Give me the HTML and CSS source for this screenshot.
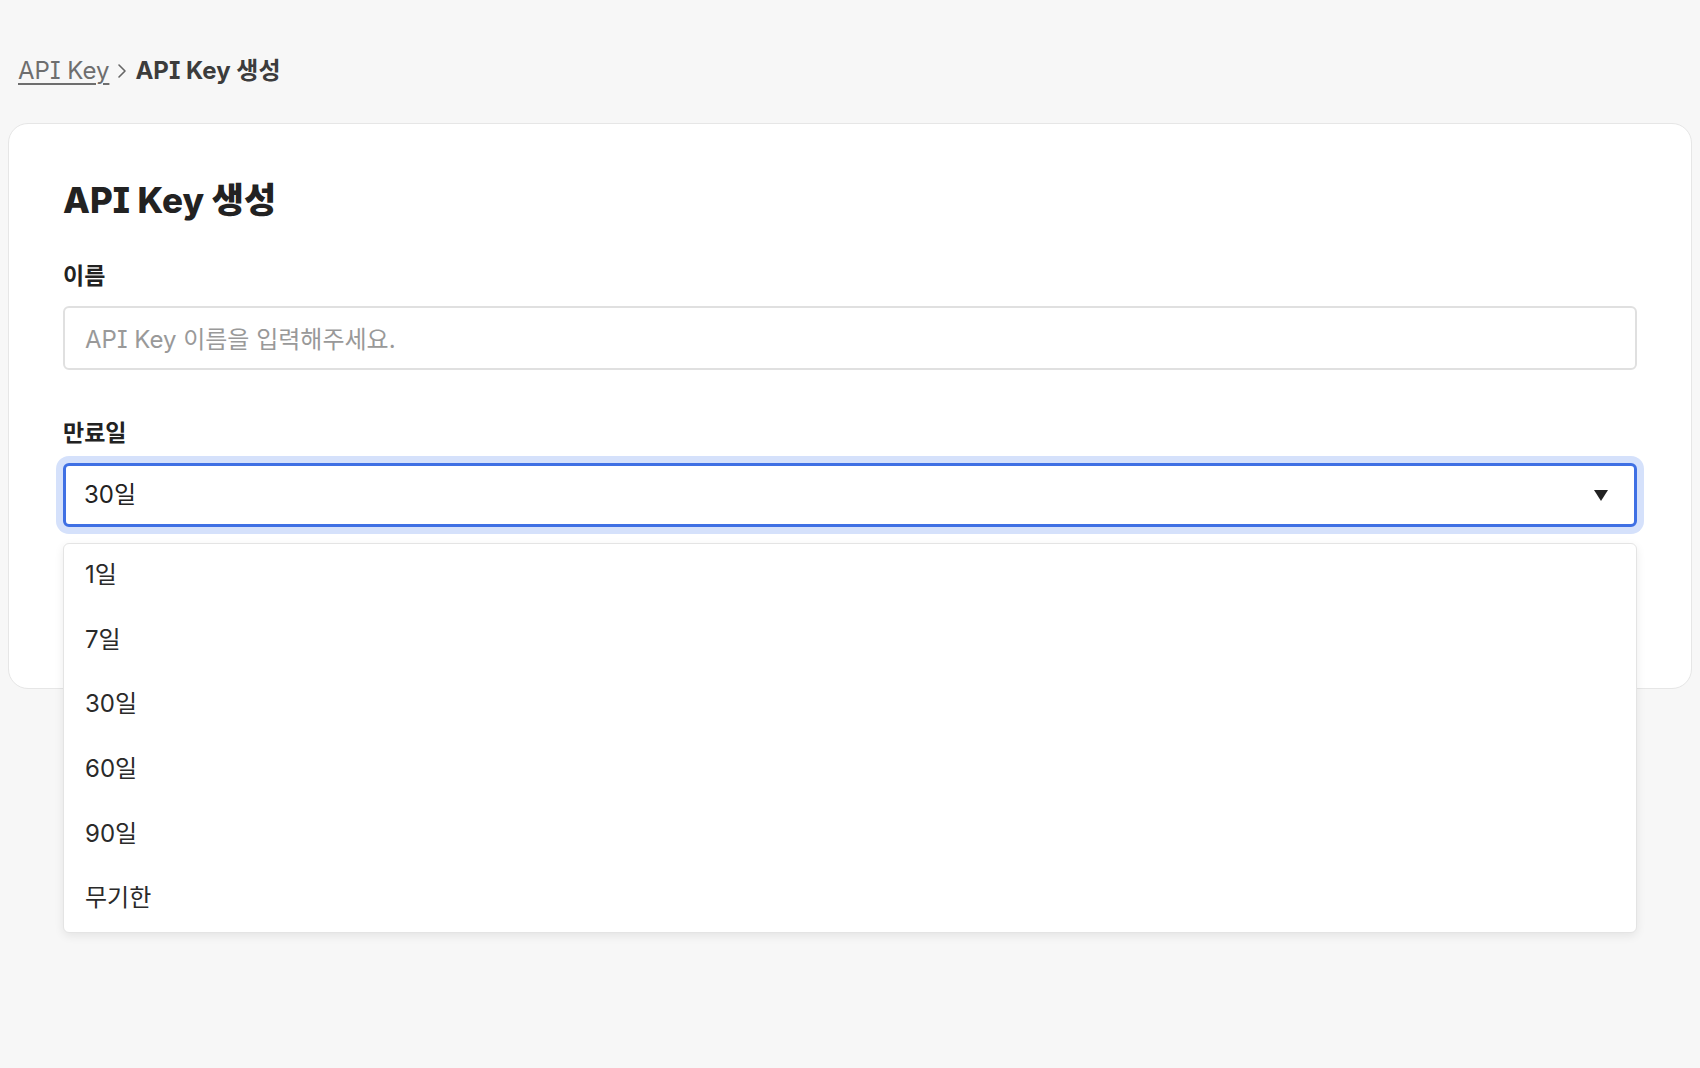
FILE: index.html
```html
<!DOCTYPE html>
<html lang="ko">
<head>
<meta charset="utf-8">
<title>API Key 생성</title>
<link rel="stylesheet" href="styles.css">
</head>
<body>
<div class="page">
  <nav class="breadcrumb">
    <a class="crumb-link" href="#">API Key</a>
    <svg class="crumb-sep" width="10" height="16" viewBox="0 0 10 16"><path d="M2 2 L8 8 L2 14" fill="none" stroke="#666" stroke-width="1.6" stroke-linecap="round" stroke-linejoin="round"/></svg>
    <span class="crumb-current">API Key 생성</span>
  </nav>
  <section class="card">
    <h1 class="title">API Key 생성</h1>
    <div class="field">
      <label class="label">이름</label>
      <div class="input"><span class="placeholder">API Key 이름을 입력해주세요.</span></div>
    </div>
    <div class="field field-expiry">
      <label class="label">만료일</label>
      <div class="select-wrap">
        <div class="select">
          <span class="select-value">30일</span>
          <svg class="select-arrow" width="14" height="11" viewBox="0 0 14 11"><path d="M0 0 H14 L7 11 Z" fill="#222"/></svg>
        </div>
        <ul class="menu">
          <li class="menu-item">1일</li>
          <li class="menu-item">7일</li>
          <li class="menu-item">30일</li>
          <li class="menu-item">60일</li>
          <li class="menu-item">90일</li>
          <li class="menu-item">무기한</li>
        </ul>
      </div>
    </div>
  </section>
</div>
</body>
</html>
```

FILE: styles.css
```css
* { box-sizing: border-box; }
html, body { margin: 0; padding: 0; }
body {
  background: #f7f7f7;
  font-family: Inter, "Noto Sans CJK KR", sans-serif;
  font-feature-settings: "cv08" 1;
  color: #222;
  min-height: 1068px;
}
.page {
  padding: 56px 8px 0;
}
.breadcrumb {
  display: flex;
  align-items: center;
  height: 30px;
  padding-left: 10px;
  gap: 8px;
  font-size: 24px;
  line-height: 30px;
}
.crumb-link {
  color: #6e6e6e;
  text-decoration: underline;
  text-underline-offset: 4px;
  text-decoration-thickness: 1.5px;
}
.crumb-sep { display: block; }
.crumb-current {
  color: #3c3c3c;
  font-weight: 700;
}
.card {
  margin-top: 37px;
  background: #fff;
  border: 1px solid #e6e6e6;
  border-radius: 20px;
  padding: 56px 54px 0;
  height: 566px;
}
.title {
  margin: 0;
  font-size: 35px;
  line-height: 40px;
  font-weight: 800;
  color: #222;
}
.field {
  margin-top: 41px;
}
.field-expiry {
  margin-top: 48px;
}
.label {
  display: block;
  font-size: 23px;
  line-height: 30px;
  font-weight: 700;
  color: #222;
}
.input {
  margin-top: 15px;
  height: 64px;
  border: 2px solid #e0e0e0;
  border-radius: 6px;
  display: flex;
  align-items: center;
  padding: 0 0 2px 20px;
  background: #fff;
}
.placeholder {
  font-size: 24px;
  color: #999;
}
.select-wrap {
  position: relative;
  margin-top: 15px;
}
.select {
  height: 64px;
  border: 3px solid #3f70e4;
  border-radius: 6px;
  box-shadow: 0 0 0 7px #d5e1fb;
  display: flex;
  align-items: center;
  justify-content: space-between;
  padding: 0 26px 0 18px;
  background: #fff;
}
.select-value {
  font-size: 24px;
  color: #222;
  padding-bottom: 5px;
}
.select-arrow { display: block; }
.menu {
  position: absolute;
  top: 80px;
  left: 0;
  right: 0;
  margin: 0;
  padding: 0;
  list-style: none;
  background: #fff;
  border: 1px solid #e4e4e4;
  border-radius: 6px;
  box-shadow: 0 3px 10px rgba(0,0,0,0.08);
  z-index: 5;
}
.menu-item {
  height: 64.6px;
  display: flex;
  align-items: center;
  padding: 0 0 7px 21px;
  font-size: 24px;
  color: #2a2a2a;
}
```
